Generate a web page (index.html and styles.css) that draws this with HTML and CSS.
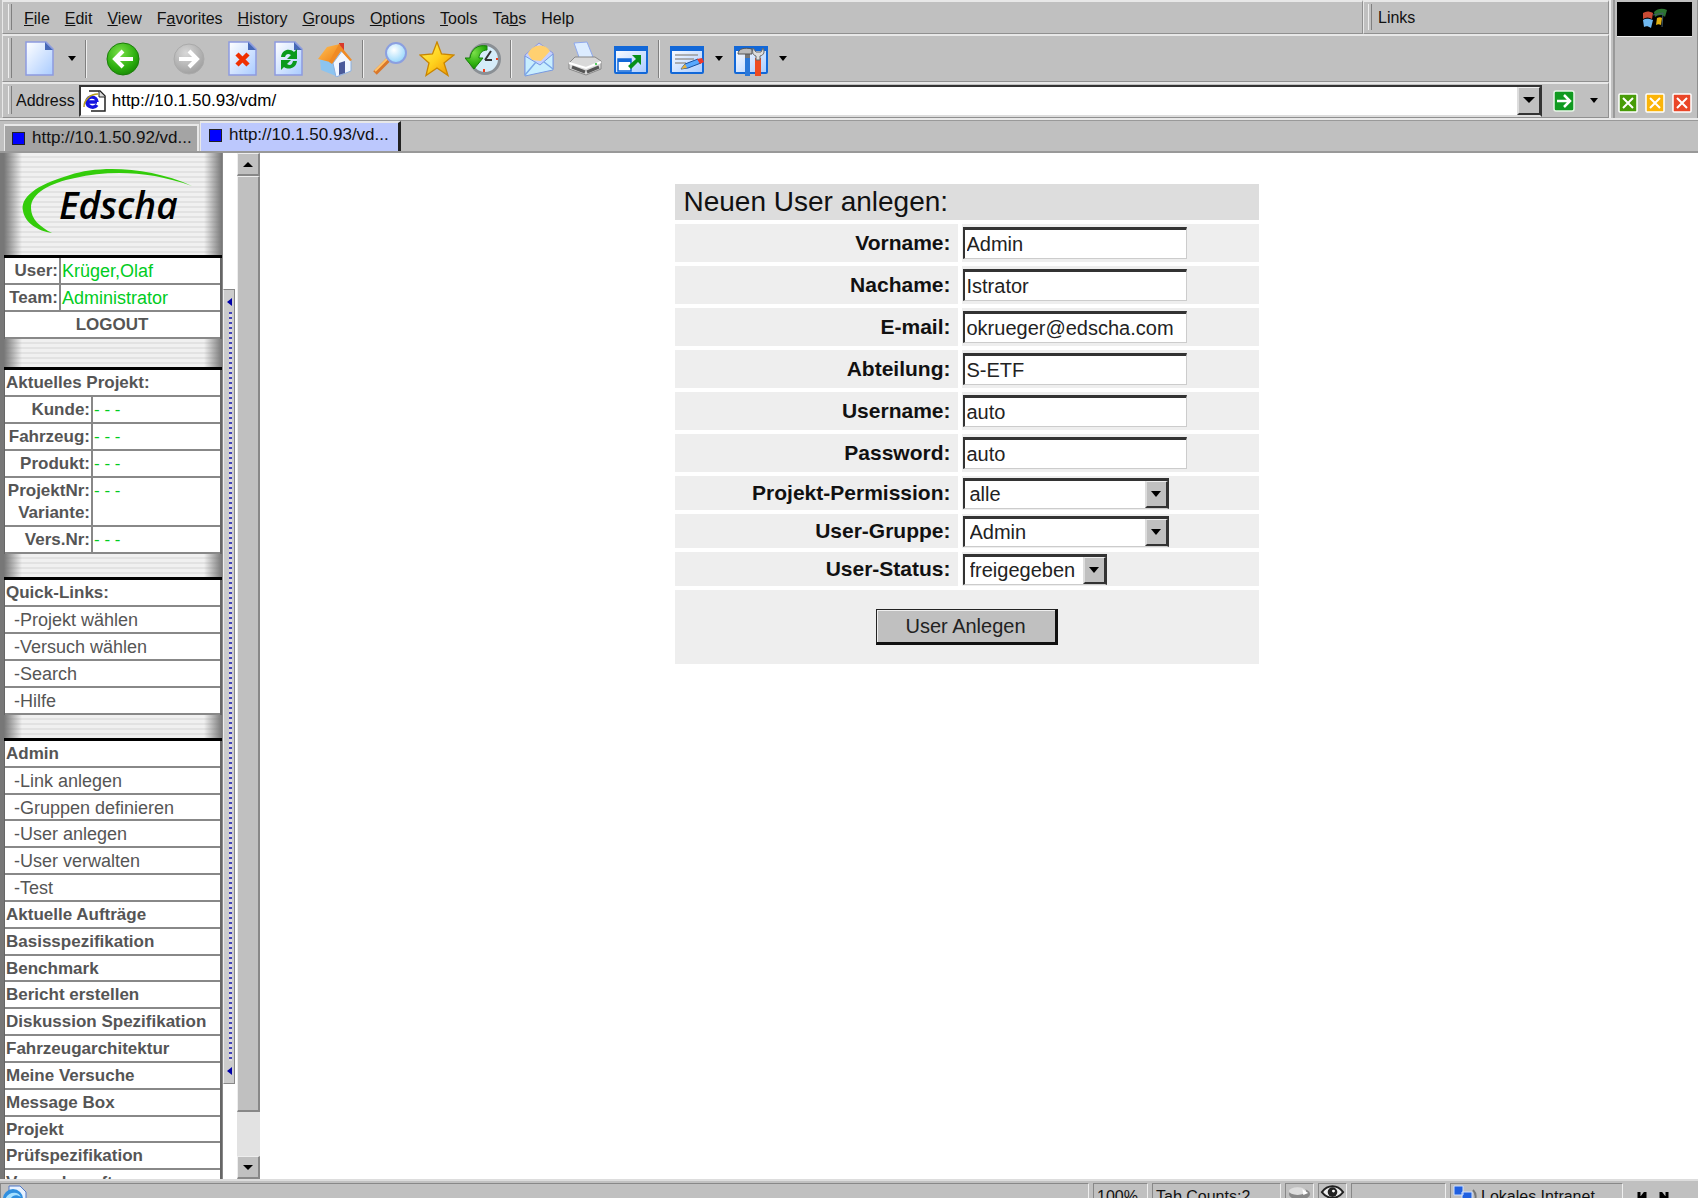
FILE: index.html
```html
<!DOCTYPE html>
<html lang="de">
<head>
<meta charset="utf-8">
<title>Neuen User anlegen</title>
<link rel="stylesheet" href="styles.css">
</head>
<body>
<svg width="0" height="0" class="defs" aria-hidden="true">
  <defs>
    <linearGradient id="paper" x1="0" y1="0" x2="1" y2="1"><stop offset="0" stop-color="#fff"/><stop offset="1" stop-color="#a9cbff"/></linearGradient>
    <radialGradient id="green" cx=".4" cy=".3" r=".8"><stop offset="0" stop-color="#7be04a"/><stop offset=".6" stop-color="#2eb010"/><stop offset="1" stop-color="#128000"/></radialGradient>
    <radialGradient id="grey" cx=".4" cy=".3" r=".8"><stop offset="0" stop-color="#d8d8d8"/><stop offset="1" stop-color="#999"/></radialGradient>
    <radialGradient id="glass" cx=".4" cy=".35" r=".7"><stop offset="0" stop-color="#fff"/><stop offset="1" stop-color="#8fd4fb"/></radialGradient>
    <linearGradient id="gold" x1="0" y1="0" x2="1" y2="1"><stop offset="0" stop-color="#fff35a"/><stop offset=".5" stop-color="#ffd21e"/><stop offset="1" stop-color="#f08c00"/></linearGradient>
    <linearGradient id="roof" x1="0" y1="0" x2="1" y2="1"><stop offset="0" stop-color="#ffc45a"/><stop offset="1" stop-color="#ef7d10"/></linearGradient>
  </defs>
</svg>

<header class="chrome">
  <div class="bars">
    <div class="bar-row">
      <nav class="bar menu-bar">
        <span class="grip"></span>
        <a href="#"><u>F</u>ile</a><a href="#"><u>E</u>dit</a><a href="#"><u>V</u>iew</a><a href="#">F<u>a</u>vorites</a><a href="#"><u>H</u>istory</a><a href="#"><u>G</u>roups</a><a href="#"><u>O</u>ptions</a><a href="#"><u>T</u>ools</a><a href="#">Ta<u>b</u>s</a><a href="#">Help</a>
      </nav>
      <div class="bar links-bar"><span class="grip"></span><span>Links</span></div>
    </div>

    <div class="bar tool-bar">
      <span class="grip"></span>
      <button class="tool" aria-label="New"><svg viewBox="0 0 36 36"><path d="M4 1h20l7 7v26H4z" fill="url(#paper)" stroke="#8d9be0" stroke-width="1.5"/><path d="M23 1l8 8h-8z" fill="#4668b8"/></svg></button>
      <button class="caret" aria-label="New options"></button>
      <span class="sep"></span>
      <button class="tool back" aria-label="Back"><svg viewBox="0 0 36 36"><circle cx="18" cy="18" r="16" fill="url(#green)" stroke="#1b7d0a"/><path d="M28 18H11M18 10l-8 8 8 8" fill="none" stroke="#fff" stroke-width="4"/></svg></button>
      <button class="tool forward" aria-label="Forward"><svg viewBox="0 0 36 36"><circle cx="18" cy="18" r="15" fill="url(#grey)" stroke="#aaa"/><path d="M8 18h17M18 10l8 8-8 8" fill="none" stroke="#fff" stroke-width="4"/></svg></button>
      <button class="tool" aria-label="Stop"><svg viewBox="0 0 36 36"><path d="M4 1h20l7 7v26H4z" fill="url(#paper)" stroke="#8d9be0" stroke-width="1.5"/><path d="M23 1l8 8h-8z" fill="#4668b8"/><path d="M12 13l11 11M23 13L12 24" stroke="#f03000" stroke-width="4.5"/></svg></button>
      <button class="tool" aria-label="Refresh"><svg viewBox="0 0 36 36"><path d="M4 1h20l7 7v26H4z" fill="url(#paper)" stroke="#8d9be0" stroke-width="1.5"/><path d="M23 1l8 8h-8z" fill="#4668b8"/><path d="M10 16c1-8 9-9 13-5l3-3v10h-10l4-4c-3-2-5-1-6 2zM26 20c-1 8-9 9-13 6l-3 3v-10h10l-4 4c3 2 5 1 6-3z" fill="#0a9a1c"/></svg></button>
      <button class="tool" aria-label="Home"><svg viewBox="0 0 36 36"><path d="M22 2h5v10l-5-3z" fill="#d8392b"/><path d="M3 19l10-2 6 7v11L4 29z" fill="#8cc4f0"/><path d="M16 22l9-12 9 10v10l-15 6z" fill="#f2f7ff" stroke="#8ab0e0"/><path d="M1 18L10 6l13-3L13 21z" fill="url(#roof)"/><path d="M22 3l13 16-2 1-9-10-9 13-3-2z" fill="#f08a24"/><path d="M22 22l6-2v12l-6 2z" fill="#4a5a9a"/></svg></button>
      <span class="sep"></span>
      <button class="tool" aria-label="Search"><svg viewBox="0 0 36 36"><path d="M15 19L2 32" stroke="#d9772b" stroke-width="5"/><path d="M14 18L2 30" stroke="#ffc46c" stroke-width="2"/><circle cx="23" cy="12" r="10" fill="url(#glass)" stroke="#8b9fe0" stroke-width="2"/></svg></button>
      <button class="tool" aria-label="Favorites"><svg viewBox="0 0 36 36"><path d="M18 1l4.500 12L35 14l-10 8 4 12.500L18 27 7 34.500 10 22 1 14l12.500-1z" fill="url(#gold)" stroke="#c98500" stroke-width="1.300"/></svg></button>
      <button class="tool" aria-label="History"><svg viewBox="0 0 36 36"><circle cx="20" cy="18" r="14.500" fill="#d5ecf9" stroke="#8a8f94" stroke-width="3"/><path d="M20 19l6-9M20 19h7" stroke="#333" stroke-width="2"/><path d="M19 28v3M31 18h2" stroke="#f04020" stroke-width="2"/><path d="M22 5C12 3 6 9 5 17H0l9 11 9-11h-4c0-4 3-8 8-8z" fill="url(#green)" stroke="#17800a"/></svg></button>
      <span class="sep"></span>
      <button class="tool" aria-label="Mail"><svg viewBox="0 0 36 36"><path d="M4 14L18 2l14 10v16L4 34z" fill="#c5d0ff" stroke="#8c98dc"/><path d="M7 13C10 4 23 1 29 10l-9 10-9-1z" fill="#ffd070"/><path d="M4 15l15 9 13-11v16L4 35z" fill="#c8eeff" stroke="#7899e0"/><path d="M4 34l11-13M32 28l-9-7" stroke="#7ba8e8" stroke-width="1.500"/></svg></button>
      <button class="tool" aria-label="Print"><svg viewBox="0 0 36 36"><path d="M7 2l13-1 6 15-13 3z" fill="#dcecff" stroke="#8ea8ee"/><path d="M2 22l6-6h20l6 4v8l-15 6-17-6z" fill="#d9d9d9" stroke="#888"/><path d="M2 22l17 5 15-6" fill="none" stroke="#fff" stroke-width="2"/><path d="M5 26l13 5M20 31l12-5" stroke="#555" stroke-width="3"/><circle cx="29" cy="23" r="1" fill="#20c030"/></svg></button>
      <button class="tool" aria-label="Full screen"><svg viewBox="0 0 36 36"><rect x="2" y="6" width="32" height="26" rx="1" fill="url(#paper)" stroke="#1268d8" stroke-width="2"/><path d="M1 5h34v5H1z" fill="#1268d8"/><path d="M5 18h13v12H5z" fill="#fff" stroke="#1268d8" stroke-width="1.500"/><path d="M5 18h13v3H5z" fill="#1268d8"/><path d="M15 25l8-7-4-4h9v10l-3-3-7 7z" fill="#079018"/></svg></button>
      <span class="sep"></span>
      <button class="tool" aria-label="Edit"><svg viewBox="0 0 36 36"><rect x="2" y="6" width="32" height="26" rx="1" fill="url(#paper)" stroke="#1268d8" stroke-width="2"/><path d="M1 5h34v5H1z" fill="#1268d8"/><path d="M6 14h23M6 18h19M6 22h11" stroke="#999" stroke-width="1.500"/><path d="M12 28l4-5 13-5 3 4-13 5z" fill="#58a8ff" stroke="#1850a0"/><path d="M12 28l4-5 2 4z" fill="#e7b13c"/><path d="M28 18l5-1 2 4-4 2z" fill="#f03828"/></svg></button>
      <button class="caret" aria-label="Edit options"></button>
      <button class="tool" aria-label="Tools"><svg viewBox="0 0 36 36"><rect x="2" y="6" width="32" height="26" rx="1" fill="url(#paper)" stroke="#1268d8" stroke-width="2"/><path d="M1 5h34v5H1z" fill="#1268d8"/><path d="M12 16h5v19h-5z" fill="#2b78d8"/><path d="M12 9h5v8h-5z" fill="#777"/><path d="M5 13c0-5 6-7 14-5v5h-9z" fill="#bbb" stroke="#555"/><path d="M22 17h6v18h-6z" fill="#ee4a20"/><path d="M20 7c-1 5 0 7 3 8v4h4v-4c4-1 5-4 3-8l-2 4h-5z" fill="#ddd" stroke="#666"/></svg></button>
      <button class="caret" aria-label="Tools options"></button>
    </div>

    <form class="bar address-bar">
      <span class="grip"></span>
      <label for="address">Address</label>
      <div class="address-box">
        <svg class="page-icon" viewBox="0 0 24 24"><path d="M6 2h11l5 5v15H8" fill="#fff" stroke="#222" stroke-width="1.500"/><path d="M16 2v6h6" fill="#ddd" stroke="#222"/><path d="M14 13H4c0-7 10-6 10 0M14 16c-3 4-10 2-10-3" fill="none" stroke="#1414e0" stroke-width="3.500"/><path d="M1 18C1 11 7 5 15 5" fill="none" stroke="#b8a020" stroke-width="1.500"/></svg>
        <input id="address" type="text" value="http://10.1.50.93/vdm/">
        <button type="button" class="drop" aria-label="Show addresses"></button>
      </div>
      <button type="button" class="go" aria-label="Go"><svg viewBox="0 0 22 22"><rect x="1" y="1" width="20" height="20" rx="2" fill="#109a20" stroke="#e6f5e6" stroke-width="1.500"/><path d="M4 11h12M11 5l6 6-6 6" fill="none" stroke="#fff" stroke-width="2.500"/></svg></button>
      <button type="button" class="caret go-caret" aria-label="Go options"></button>
    </form>
  </div>

  <div class="throbber">
    <div class="throbber-screen"><svg viewBox="0 0 28 24"><path d="M2 6c3-2 6-2 10 0l-1 6c-3-2-6-2-9 0z" fill="#c84a34"/><path d="M13 5c4-4 9-4 13-2l-2 7c-3-3-7-2-10 0z" fill="#2c7430"/><path d="M2 13c3-2 6-1 10 0l-2 8c-3-2-5-2-7-1z" fill="#6fb8f0"/><path d="M16 11c2-1 4-1 5 0l-1 7c-2-1-3-1-5 0z" fill="#e0b010"/><path d="M12 8l10-2-1 14" fill="none" stroke="#415a68"/></svg></div>
    <div class="closers">
      <button aria-label="Close others"><svg viewBox="0 0 20 20"><rect x="1" y="1" width="18" height="18" rx="1" fill="#489c08" stroke="#fff" stroke-width="1.500"/><path d="M5 5l10 10M15 5L5 15" stroke="#fff" stroke-width="2"/></svg></button>
      <button aria-label="Close tab"><svg viewBox="0 0 20 20"><rect x="1" y="1" width="18" height="18" rx="1" fill="#fbb408" stroke="#fff" stroke-width="1.500"/><path d="M5 5l10 10M15 5L5 15" stroke="#fff" stroke-width="2"/></svg></button>
      <button aria-label="Close all"><svg viewBox="0 0 20 20"><rect x="1" y="1" width="18" height="18" rx="1" fill="#ea4628" stroke="#fff" stroke-width="1.500"/><path d="M5 5l10 10M15 5L5 15" stroke="#fff" stroke-width="2"/></svg></button>
    </div>
  </div>
</header>

<nav class="tabs">
  <a class="tab" href="#">http://10.1.50.92/vd...</a>
  <a class="tab active" href="#">http://10.1.50.93/vd...</a>
</nav>

<div class="frames">
  <aside class="side">
    <div class="band logo-band">
      <svg class="logo" viewBox="0 0 222 101" role="img" aria-label="Edscha"><path d="M192 33C150 14 100 12 70 22C35 32 20 45 23 58C25 70 38 78 52 80C40 74 31 66 31 55C31 40 50 30 75 25C110 17 150 18 192 33z" fill="#33cc0a"/><text x="59" y="66">Edscha</text></svg>
    </div>
    <table class="info user">
      <tr><th scope="row">User:</th><td>Krüger,Olaf</td></tr>
      <tr><th scope="row">Team:</th><td>Administrator</td></tr>
      <tr><td colspan="2" class="logout"><a href="#">LOGOUT</a></td></tr>
    </table>
    <div class="band"></div>
    <table class="info project">
      <tr><th colspan="2" class="head">Aktuelles Projekt:</th></tr>
      <tr><th scope="row">Kunde:</th><td>- - -</td></tr>
      <tr><th scope="row">Fahrzeug:</th><td>- - -</td></tr>
      <tr><th scope="row">Produkt:</th><td>- - -</td></tr>
      <tr class="double"><th scope="row">ProjektNr:<br>Variante:</th><td>- - -</td></tr>
      <tr><th scope="row">Vers.Nr:</th><td>- - -</td></tr>
    </table>
    <div class="band slim"></div>
    <ul class="links">
      <li>Quick-Links:</li>
      <li class="sub"><a href="#">-Projekt wählen</a></li>
      <li class="sub"><a href="#">-Versuch wählen</a></li>
      <li class="sub"><a href="#">-Search</a></li>
      <li class="sub"><a href="#">-Hilfe</a></li>
    </ul>
    <div class="band slim"></div>
    <ul class="links admin">
      <li>Admin</li>
      <li class="sub"><a href="#">-Link anlegen</a></li>
      <li class="sub"><a href="#">-Gruppen definieren</a></li>
      <li class="sub"><a href="#">-User anlegen</a></li>
      <li class="sub"><a href="#">-User verwalten</a></li>
      <li class="sub"><a href="#">-Test</a></li>
      <li><a href="#">Aktuelle Aufträge</a></li>
      <li><a href="#">Basisspezifikation</a></li>
      <li><a href="#">Benchmark</a></li>
      <li><a href="#">Bericht erstellen</a></li>
      <li><a href="#">Diskussion Spezifikation</a></li>
      <li><a href="#">Fahrzeugarchitektur</a></li>
      <li><a href="#">Meine Versuche</a></li>
      <li><a href="#">Message Box</a></li>
      <li><a href="#">Projekt</a></li>
      <li><a href="#">Prüfspezifikation</a></li>
      <li><a href="#">Versuchsauftrag</a></li>
    </ul>
  </aside>
  <div class="fold"><i></i><b></b><i></i></div>
  <div class="scroll">
    <button class="up" aria-label="Scroll up"></button>
    <div class="thumb"></div>
    <div class="track"></div>
    <button class="down" aria-label="Scroll down"></button>
  </div>

  <main class="content">
    <form>
      <table class="form">
        <tr class="title"><td colspan="2">Neuen User anlegen:</td></tr>
        <tr><th><label for="vorname">Vorname:</label></th><td><input id="vorname" value="Admin"></td></tr>
        <tr><th><label for="nachname">Nachame:</label></th><td><input id="nachname" value="Istrator"></td></tr>
        <tr><th><label for="email">E-mail:</label></th><td><input id="email" value="okrueger@edscha.com"></td></tr>
        <tr><th><label for="abteilung">Abteilung:</label></th><td><input id="abteilung" value="S-ETF"></td></tr>
        <tr><th><label for="username">Username:</label></th><td><input id="username" value="auto"></td></tr>
        <tr><th><label for="password">Password:</label></th><td><input id="password" value="auto"></td></tr>
        <tr class="pick"><th><label for="permission">Projekt-Permission:</label></th><td><div class="combo"><select id="permission"><option>alle</option></select><span class="drop"></span></div></td></tr>
        <tr class="pick"><th><label for="gruppe">User-Gruppe:</label></th><td><div class="combo"><select id="gruppe"><option>Admin</option></select><span class="drop"></span></div></td></tr>
        <tr class="pick"><th><label for="status">User-Status:</label></th><td><div class="combo narrow"><select id="status"><option>freigegeben</option></select><span class="drop"></span></div></td></tr>
        <tr class="submit"><td colspan="2"><button type="button">User Anlegen</button></td></tr>
      </table>
    </form>
  </main>
</div>

<footer class="status">
  <div class="panel grow"><svg viewBox="0 0 28 28"><path d="M8 2h11l6 6v18H8z" fill="#e8f2ff" stroke="#5078c8"/><circle cx="12" cy="15" r="10" fill="#2f8fe0"/><path d="M4 16c2-8 13-10 16-3-5-3-9-2-11 3z" fill="#a6e0ff"/></svg></div>
  <div class="panel zoom">100%</div>
  <div class="panel count">Tab Counts:2</div>
  <div class="panel small"><svg viewBox="0 0 28 20"><ellipse cx="14" cy="10" rx="11" ry="6" fill="#888"/><ellipse cx="12" cy="7" rx="9" ry="4" fill="#ddd"/><path d="M17 5l6 4-5 2z" fill="#fff"/></svg></div>
  <div class="panel small"><svg viewBox="0 0 28 20"><path d="M3 8c6-8 16-8 22 0-6 8-16 8-22 0z" fill="#eee" stroke="#222" stroke-width="2"/><circle cx="14" cy="8" r="5" fill="#222"/><circle cx="15" cy="7" r="1.500" fill="#fff"/></svg></div>
  <div class="panel blank"></div>
  <div class="panel zone"><svg viewBox="0 0 28 28"><path d="M3 2h9v9H3zM11 8h10v10H11z" fill="#2060e0" stroke="#cfe0ff"/><path d="M22 6c4 4 3 10 0 14" fill="none" stroke="#777" stroke-width="2"/></svg>Lokales Intranet</div>
  <div class="panel nav"><svg viewBox="0 0 36 20"><path d="M4 7v12M10 7v12M10 8l-6 8M26 7v12M32 7v12M26 8l6 8" fill="none" stroke="#000" stroke-width="3"/></svg></div>
</footer>
</body>
</html>
```
FILE: styles.css
```css
* { box-sizing: border-box; }
html, body { height: 100%; }
body {
  margin: 0;
  display: flex;
  flex-direction: column;
  overflow: hidden;
  background: #fff;
  color: #111;
  font-family: "Liberation Sans", Arial, sans-serif;
  font-size: 17px;
}
a { color: inherit; text-decoration: none; }
button { padding: 0; border: 0; background: none; font: inherit; color: inherit; }
svg { display: block; }
.defs { position: absolute; }
ul { margin: 0; padding: 0; list-style: none; }

/* browser bars */
.chrome { display: flex; background: #c0c0c0; border-bottom: 2px solid #e8e8e8; }
.bars { flex: 1; min-width: 0; border-right: 2px solid #eee; padding-left: 2px; }
.bar-row { display: flex; }
.bar {
  display: flex;
  align-items: center;
  border: 1px solid #909090;
  border-top: 2px solid #e8e8e8;
  border-left: 1px solid #e8e8e8;
}
.grip {
  flex: none;
  width: 4px;
  align-self: stretch;
  margin: 2px 0 3px 5px;
  border-left: 1px solid #eee;
  border-right: 1px solid #808080;
}
.menu-bar { flex: 1; height: 34px; gap: 15px; padding-top: 2px; font-size: 16px; }
.menu-bar .grip { margin: 0 -3px 3px 5px; }
.links-bar { width: 246px; height: 34px; gap: 6px; font-size: 16px; }
.links-bar .grip { margin-left: 4px; }
.tool-bar { height: 48px; }
.tool-bar .grip { margin-right: 5px; }
.tool { flex: none; width: 46px; height: 40px; display: grid; place-items: center; }
.tool svg { width: 36px; height: 36px; }
.back { margin-left: 9px; }
.forward { margin: 0 8px 0 20px; }
.sep { flex: none; width: 2px; height: 38px; margin: 0 4px; border-left: 1px solid #808080; border-right: 1px solid #eee; }
.caret { flex: none; width: 18px; height: 34px; display: grid; place-items: center; }
.caret::before, .drop::before {
  content: "";
  border: 4px solid transparent;
  border-top: 5px solid #000;
  border-bottom: 0;
}
.address-bar { height: 36px; }
.address-bar label { margin: 0 4px; font-size: 16px; }
.address-box {
  flex: 1;
  display: flex;
  align-items: center;
  height: 32px;
  background: #fff;
  border: 2px solid #333;
  border-bottom: 2px solid #ddd;
}
.page-icon { width: 24px; height: 24px; margin: 0 5px 0 2px; }
.address-box input { flex: 1; min-width: 0; border: 0; padding: 0; outline: 0; background: none; font: inherit; }
.drop {
  display: grid;
  place-items: center;
  width: 23px;
  background: #c0c0c0;
  border: 2px solid #333;
  border-top: 1px solid #eee;
  border-left: 2px solid #ddd;
}
.address-box .drop { height: 28px; border-right-width: 1px; }
.address-box .drop::before { border-width: 6px 6px 0; }
.go { width: 22px; height: 22px; margin: 0 10px 0 11px; }
.go-caret { margin-right: 5px; }

.throbber {
  width: 85px;
  margin-left: 2px;
  padding: 2px 5px 5px 2px;
  display: flex;
  flex-direction: column;
  justify-content: space-between;
  border-left: 2px solid #999;
  border-right: 1px solid #909090;
}
.throbber-screen { height: 35px; display: grid; place-items: center; background: #000; border-bottom: 1px solid #eee; }
.throbber-screen svg { width: 28px; height: 24px; }
.closers { display: flex; justify-content: space-between; padding: 0 0 0 1px; }
.closers svg { width: 20px; height: 20px; }

/* browser tabs */
.tabs {
  display: flex;
  align-items: flex-end;
  height: 33px;
  padding-left: 4px;
  gap: 1px;
  background: #c0c0c0;
  border-top: 1px solid #999;
  border-bottom: 2px solid #999;
}
.tab {
  display: flex;
  align-items: center;
  gap: 7px;
  width: 195px;
  height: 27px;
  padding: 0 0 1px 7px;
  background: #a4a4a4;
  border: 2px solid #e8e8e8;
  border-bottom: 0;
  border-left-width: 1px;
  white-space: nowrap;
}
.tab::before { content: ""; width: 11px; height: 11px; background: #00f; border: 1px solid #222; }
.tab.active { width: 201px; height: 30px; padding: 0 0 4px 8px; background: #bcc8fd; border-right: 3px solid #222; }

/* frames */
.frames { flex: 1; min-height: 0; display: flex; }
.side {
  flex: none;
  width: 223px;
  overflow: hidden;
  border-left: 4px solid #777;
  border-right: 1px solid #888;
  color: #555;
}
.band {
  height: 31px;
  border-bottom: 3px solid #000;
  background:
    linear-gradient(90deg, #777, #7770 18px, #7770 calc(100% - 18px), #777),
    repeating-linear-gradient(#f0f0f0 0 3px, #e2e2e2 3px 5px);
}
.band.slim { height: 26px; }
.logo-band { height: 105px; }
.logo { width: 222px; height: 101px; margin-left: -4px; }
.logo text { font: italic 600 37px "Open Sans", sans-serif; fill: #000; }

.info { width: 100%; border-spacing: 0; border-left: 1px solid #666; border-right: 2px solid #666; }
.info th, .info td { height: 27px; padding: 2px 2px 0; border-bottom: 2px solid #888; line-height: 22px; white-space: nowrap; }
.info th { padding-right: 1px; text-align: right; border-right: 2px solid #888; vertical-align: top; }
.info td { color: #0c2; font-size: 18px; text-align: left; vertical-align: top; padding-left: 1px; }
.user th { width: 56px; }
.project th { width: 88px; }
.project td { font-size: 17px; }
.info .head { width: auto; padding-left: 1px; text-align: left; border-right: 0; }
.info .logout { color: #555; font-size: 17px; font-weight: bold; text-align: center; }
.info .double th, .info .double td { height: 49px; }

.links { border-left: 1px solid #666; border-right: 2px solid #666; display: grid; grid-auto-rows: 27px; }
.links li { padding: 2px 0 0 1px; border-bottom: 2px solid #888; line-height: 22px; font-weight: bold; white-space: nowrap; }
.links .sub { padding-left: 9px; font-size: 18px; font-weight: normal; }
.admin { height: 456px; grid-auto-rows: 1fr; }

.fold {
  flex: none;
  width: 12px;
  margin: 136px 0 95px;
  padding: 8px 2px;
  display: flex;
  flex-direction: column;
  align-items: flex-end;
  gap: 6px;
  background: #ccc;
  border: 1px solid #888;
  border-left-color: #eee;
}
.fold i { border: 4px solid transparent; border-right: 5px solid #00a; border-left: 0; }
.fold b { flex: 1; width: 3px; background: repeating-linear-gradient(#44b 0 2px, #ddd 2px 5px); }

.scroll { flex: none; width: 23px; margin-left: 2px; display: flex; flex-direction: column; }
.scroll button, .thumb { background: #c0c0c0; border: 1px solid #eee; border-right: 2px solid #888; border-bottom: 2px solid #888; }
.scroll button { height: 23px; display: grid; place-items: center; }
.scroll button::before { content: ""; border: 0 solid transparent; }
.scroll .up::before { border-width: 0 5px 5px; border-bottom-color: #000; }
.scroll .down::before { border-width: 5px 5px 0; border-top-color: #000; }
.thumb { flex: 21; }
.track { flex: 1; background: #e2e2e2; }

/* user form */
.content { flex: 1; display: flex; justify-content: center; align-items: flex-start; padding: 27px 25px 0 0; }
.form { width: 592px; border-spacing: 4px; }
.form th, .form td { height: 38px; padding: 0 1px; background: #eee; }
.form th { width: 283px; padding-right: 7px; text-align: right; font-size: 21px; line-height: 24px; }
.form .title td { height: 36px; padding-left: 9px; background: #ddd; font-size: 28px; line-height: 32px; }
.form input, .form select {
  display: block;
  width: 224px;
  height: 32px;
  margin: 0;
  padding: 0 2px;
  border: 1px solid #ccc;
  border-top: 3px solid #333;
  border-left: 2px solid #333;
  border-radius: 0;
  background: #fff;
  color: #222;
  font: 20px "Liberation Sans", Arial, sans-serif;
}
.form .pick th, .form .pick td { height: 34px; }
.combo { position: relative; width: 206px; }
.combo.narrow { width: 144px; }
.form .combo select { width: 100%; height: 31px; padding: 0 5px; appearance: none; border-right: 2px solid #333; }
.combo .drop { position: absolute; top: 3px; right: 1px; bottom: 1px; pointer-events: none; }
.combo .drop::before { border-width: 6px 5px 0; }
.form .submit td { height: 74px; text-align: center; }
.submit button {
  width: 182px;
  height: 36px;
  background: #c0c0c0;
  border: 1px solid #222;
  border-right: 3px solid #111;
  border-bottom: 3px solid #111;
  box-shadow: inset 1px 1px #eee;
  color: #222;
  font-size: 20px;
}

/* status bar */
.status { flex: none; display: flex; gap: 4px; height: 19px; overflow: hidden; background: #c0c0c0; border-top: 2px solid #ddd; padding-top: 2px; font-size: 16px; }
.panel { flex: none; display: flex; height: 28px; padding: 4px 3px 0; border: 1px solid #888; border-right-color: #eee; line-height: 18px; white-space: nowrap; }
.grow { flex: 1; padding: 0; }
.grow svg, .zone svg { width: 28px; height: 28px; margin-top: -4px; }
.grow svg { margin: 0; }
.zoom { width: 55px; }
.count { width: 129px; }
.small { width: 29px; padding: 0; }
.small svg { width: 28px; height: 20px; }
.blank { width: 95px; }
.zone { width: 173px; padding-left: 0; gap: 2px; }
.nav { width: 71px; padding: 2px 0 0 8px; border: 0; }
.nav svg { width: 36px; height: 20px; }
```
